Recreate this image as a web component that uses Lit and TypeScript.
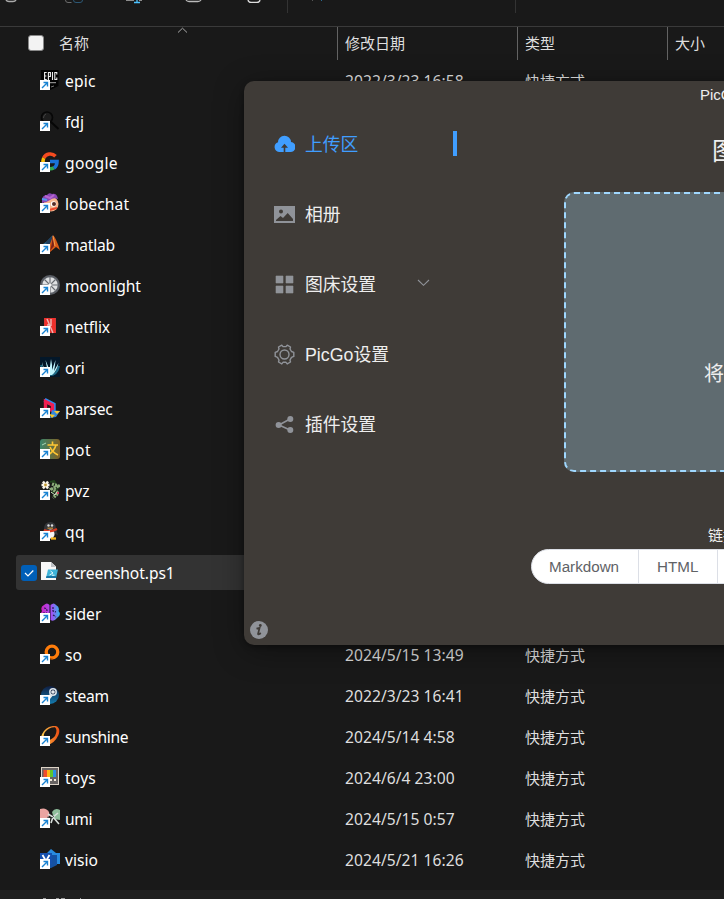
import { LitElement, html, css, svg, nothing } from "lit";
import { customElement, property } from "lit/decorators.js";
import { styleMap } from "lit/directives/style-map.js";

const icons: Record<string, unknown> = {
  epic: svg`<path d="M1 0H18.5V16L10 20L1 17Z" fill="#030303"/><path d="M6.7 2.5H4.6V9.5H6.7M4.6 6H6.4M8.4 10V2.5H10.4V6.5H8.4M12.5 2V10M16.8 4.5V2.5H14.8V9.5H16.8V7.5" fill="none" stroke="#eee" stroke-width="1.1"/><path d="M10 12.7H16" stroke="#aaa"/><path d="M11 17L14 16" stroke="#777"/>`,
  fdj: svg`<circle cx="7" cy="6.5" r="5.5" fill="#1d1d1d" stroke="#070707" stroke-width="1.7"/><path d="M11 11L18.5 18" stroke="#060606" stroke-width="2"/><path d="M3.5 7A4 4 0 0 1 6 3" stroke="#444" fill="none"/>`,
  google: svg`<g fill="none" stroke-width="3.6"><path d="M15.5 4.2A7.3 7.3 0 0 0 3.7 6" stroke="#f44b20"/><path d="M3.7 6A7.5 7.5 0 0 0 3.5 12" stroke="#fbbc05"/><path d="M3.5 12A7.3 7.3 0 0 0 14 15.8" stroke="#34a853"/><path d="M10 9.5H17Q17 14 14 16" stroke="#1a73d9"/></g>`,
  lobechat: svg`<circle cx="11" cy="11" r="7.5" fill="#f5b58d"/><path d="M2 6Q3 2 7 2Q9-1 12 1Q17 0 18 6Q13 4 10 7Q6 10 2 10Z" fill="#8947b5"/><path d="M5 3L10 5L14 2" stroke="#b765d0" stroke-width="2" fill="none"/><path d="M2 6L7 7" stroke="#559af0" stroke-width="2"/><circle cx="13.5" cy="11" r="2.8" fill="#fff"/><circle cx="14" cy="11" r="2" fill="#552c27"/><path d="M9 17L17 15" stroke="#ea4a2e" stroke-width="2"/>`,
  matlab: svg`<path d="M0 12L6 8L13 1L10 14L5 16Z" fill="#28658d"/><path d="M6 8L13 1L11 11L7 12Z" fill="#203f5c"/><path d="M13 1Q16 4 20 16L16 13L10 18L8 13Q11 9 13 1Z" fill="#d75a19"/><path d="M13 1L14 12L10 17Q12 10 13 1Z" fill="#7b221a"/><path d="M13 2L15 12" stroke="#f4a04b"/>`,
  moonlight: svg`<circle cx="10" cy="10" r="10" fill="#5a5e65"/><circle cx="10" cy="10" r="7.7" fill="#dfe1e3"/><path d="M10 2V18M2 10H18M4.5 4.5L15.5 15.5M4.5 15.5L15.5 4.5" stroke="#676b71" stroke-width="1.1"/><circle cx="10" cy="10" r="1.7" fill="#f5f5f5"/>`,
  netflix: svg`<path d="M4 2H16V17H4Z" fill="#d93632"/><path d="M5 2H8L11 10V2H15V17H12L8 8V17H5Z" fill="#ee2f2b"/><path d="M7 3L13 17M8 8V15M11 3V10" stroke="#eeb9b7" stroke-width="1.4"/>`,
  ori: svg`<rect width="20" height="20" fill="#031729"/><path d="M1 8Q4 18 10 18Q17 18 19 9" stroke="#1f6d8a" stroke-width="2" fill="none"/><path d="M2 5Q2 11 8 16L5.5 3Q8 9 9.5 13L11 2Q12.5 8 12 13L15.5 3Q15 10 14 14L18.5 6Q17 14 12 18H8Q4 13 2 5Z" fill="#bff3fc"/>`,
  parsec: svg`<path d="M5 1.5V13" stroke="#2f8cf2" stroke-width="2"/><path d="M4.5 2L13.5 6.5V13" stroke="#2f8cf2" stroke-width="4.4" fill="none"/><path d="M5.5 17V3.5L12.5 7V12.5L8 11" stroke="#f01f51" stroke-width="3.4" fill="none"/><path d="M12 12L20 13L16 19L10 20Z" fill="#3487dc"/><path d="M14 13L20 13L17 16Z" fill="#f9c631"/><path d="M9 16L15 17L12 20Z" fill="#f5c626"/>`,
  pot: svg`<defs><linearGradient id="potg"><stop stop-color="#3b856c"/><stop offset="1" stop-color="#826123"/></linearGradient></defs><rect width="20" height="20" rx="3" fill="url(#potg)"/><path d="M7.5 6H18M12.5 2.5V6M16 6Q14.5 12 8 16M10 8Q12 13 18 16" stroke="#ffc633" stroke-width="1.6" fill="none"/><path d="M2 6L6 4" stroke="#a8d8b7"/>`,
  pvz: svg`<path d="M10 2L14 1L18 8L12 13" stroke="#21431c" stroke-width="2" fill="none"/><g stroke-dasharray="2 1"><path d="M12 4L18 6L12 9L18 13L13 18" stroke="#8cad7a" stroke-width="3.4" fill="none"/></g><path d="M3 1.5L8 8.5M8 1.5L3 8.5M1.5 5H9.5" stroke="#fbf6e8" stroke-width="2.4"/><circle cx="5.5" cy="5" r="1.4" fill="#c09832"/><path d="M11 12L15 15L17 12" stroke="#d4e4c7" fill="none"/><path d="M17 13H19" stroke="#d14262" stroke-width="2"/>`,
  qq: svg`<path d="M4 8Q4 1 10.5 1Q16 1 16 8L18 14L15 13Q14 18 10 18H5L3 11Z" fill="#34363a"/><ellipse cx="10.5" cy="13" rx="4" ry="4.5" fill="#f4f4f4"/><circle cx="8.5" cy="4.5" r="1.2" fill="#ddd"/><circle cx="12" cy="4.5" r="1.2" fill="#ddd"/><path d="M7.5 7.2H13" stroke="#b98a3a" stroke-width="1.3"/><path d="M4 9Q10 12 17 8" stroke="#d9391f" stroke-width="2.2" fill="none"/><path d="M11 17.5H16" stroke="#f5b51b" stroke-width="2.3"/>`,
  file: svg`<path d="M1 0H11L16 4.5V18H1Z" fill="#f7f7f7"/><path d="M11 0V5H16Z" fill="#bec2c6"/><path d="M8 7.5H18L16 16H6Z" fill="#3eb4d9"/><path d="M6.5 14H16.5L16 16H6Z" fill="#1876a6"/><path d="M10.5 9L13 11L9.5 13M12 13.2H14.5" stroke="#e9fbff" fill="none"/>`,
  sider: svg`<defs><linearGradient id="sideg"><stop stop-color="#ce22bd"/><stop offset=".55" stop-color="#a64df5"/><stop offset="1" stop-color="#2cb9ea"/></linearGradient></defs><path d="M9.5 2Q7-1 4 2Q0 4 2 8Q-1 12 3 15Q5 19 9.5 17ZM10.5 2Q14-1 16 2Q20 4 18.5 8Q22 12 17 15Q14 19 10.5 17Z" fill="url(#sideg)"/><path d="M4 5Q7 5 7 8M3 10H7M13 4V8L16 9M13 12L16 14M8 12L6 14" stroke="#26194b" stroke-width="1.2" fill="none" stroke-dasharray="2 1"/>`,
  so: svg`<circle cx="12" cy="8" r="5.8" fill="none" stroke="#ff7d0b" stroke-width="3.3"/><path d="M6.5 12Q8 15 13 15.3" fill="none" stroke="#a94600" stroke-width="1"/>`,
  steam: svg`<defs><linearGradient id="steamg" x2="0" y2="1"><stop stop-color="#101e42"/><stop offset="1" stop-color="#147bae"/></linearGradient></defs><circle cx="10" cy="10" r="9" fill="url(#steamg)"/><path d="M12 9L8 14L4 12" stroke="#e4e9ed" stroke-width="3.2"/><circle cx="13" cy="7" r="3.2" fill="#1c2d4c" stroke="#dce3e8" stroke-width="1.5"/><circle cx="13" cy="7" r="1.8" fill="#e5e9ec"/>`,
  sunshine: svg`<defs><linearGradient id="sung" x1="0" x2="1"><stop stop-color="#ffd04e"/><stop offset="1" stop-color="#ec4b12"/></linearGradient></defs><path fill-rule="evenodd" d="M16 0Q21 2 18.5 9Q14 18.5 7 18.5Q1 17 1 11Q3 4 9 1Q13-.5 16 0ZM15 1.2Q9 1 5 6Q2 11 6 14Q11 15 15 10Q18 4 15 1.2Z" fill="url(#sung)"/>`,
  toys: svg`<rect x="1.5" y=".5" width="17" height="17" fill="#686463" stroke="#ddd4c8"/><path d="M3.5 3H7V10H3.5Z" fill="#ef4c2b"/><path d="M7 3H10V10H7Z" fill="#ffb515"/><path d="M10 3H13V10H10Z" fill="#5fc52e"/><path d="M13 3H16V10H13Z" fill="#2991e4"/><path d="M10 12H12V14H10ZM14 12H16V14H14Z" fill="#f4ece0"/>`,
  umi: svg`<path d="M0 1Q6-1 9 4Q10 9 6 11H0Z" fill="#eaa4a1"/><path d="M12 4Q15-1 20 2V12L14 11Z" fill="#8ebd9b"/><path d="M8 6L13 9L18 5M13 9L11 15M13 9L19 16" stroke="#d8dfdb" stroke-width="1.6" fill="none"/><path d="M7 9L11 11L14 8" stroke="#59615e" fill="none"/>`,
  visio: svg`<path d="M6 5L11 0L16 4H20V15H15L10 19L5 14Z" fill="#288be0"/><path d="M10 6H17V16L11 19L7 15Z" fill="#1551a2"/><path d="M0 4H12V15H0Z" fill="#1550ae"/><path d="M2.5 6L6 12L9.5 6" stroke="#fff" stroke-width="1.8" fill="none"/>`,
};

interface Entry {
  name: string;
  date?: string;
  icon?: string;
  selected?: boolean;
  tracking?: number;
}

const entries: Entry[] = [
  { name: "epic", date: "2022/3/23 16:58", tracking: 0.2 },
  { name: "fdj" },
  { name: "google", tracking: 0.35 },
  { name: "lobechat", tracking: 0.1 },
  { name: "matlab", tracking: -0.25 },
  { name: "moonlight" },
  { name: "netflix", tracking: -0.1 },
  { name: "ori" },
  { name: "parsec", tracking: -0.15 },
  { name: "pot", tracking: 0.5 },
  { name: "pvz" },
  { name: "qq", tracking: 0.3 },
  { name: "screenshot.ps1", icon: "file", selected: true, tracking: -0.07 },
  { name: "sider" },
  { name: "so", date: "2024/5/15 13:49" },
  { name: "steam", date: "2022/3/23 16:41", tracking: -0.3 },
  { name: "sunshine", date: "2024/5/14 4:58", tracking: -0.4 },
  { name: "toys", date: "2024/6/4 23:00", tracking: 0.2 },
  { name: "umi", date: "2024/5/15 0:57", tracking: -0.3 },
  { name: "visio", date: "2024/5/21 16:26" },
];

@customElement("file-row")
export class FileRow extends LitElement {
  @property({ attribute: false }) entry!: Entry;

  static styles = css`
    :host { display: block; height: 35px; }
    .row {
      display: grid;
      grid-template-columns: 321px 180px 150px 1fr;
      align-items: start;
      height: 35px;
      margin-left: 16px;
      border-radius: 3px;
      box-sizing: border-box;
    }
    .selected { background: #333; }
    .name { display: flex; align-items: center; height: 34px; font-size: 15.6px; color: #fff; }
    .check { width: 16px; height: 16px; margin: 2px 4px 0 5px; border-radius: 3px; display: flex; }
    .selected .check { background: #005fb8; }
    .icon { width: 20px; height: 20px; margin: 0 5px 0 -1px; flex: none; }
    .label { line-height: 22px; padding-top: 2px; }
    .meta { padding: 7px 0 0 8px; font-size: 15px; line-height: 22px; color: #dedede; }
    .date { font-size: 15.6px; letter-spacing: 0.05px; }
  `;

  render() {
    const e = this.entry;
    return html`
      <div class="row ${e.selected ? "selected" : ""}">
        <div class="name">
          <span class="check">${e.selected
            ? html`<svg width="16" height="16"><path d="M4 8L7 11L12.3 5.5" fill="none" stroke="#fff" stroke-width="1.2"/></svg>`
            : nothing}</span>
          <svg class="icon" viewBox="0 0 20 20">
            ${icons[e.icon ?? e.name]}
            ${e.selected
              ? nothing
              : svg`<rect y="10" width="10" height="10" fill="#fff"/><path d="M2 18L7 13M3.5 12.5H7.5V16.5" fill="none" stroke="#1983d2" stroke-width="1.4"/>`}
          </svg>
          <span class="label" style=${styleMap({ letterSpacing: `${e.tracking ?? 0}px` })}>${e.name}</span>
        </div>
        <div class="meta date">${e.date}</div>
        <div class="meta">${e.date ? "快捷方式" : nothing}</div>
      </div>
    `;
  }
}

const menu = [
  {
    label: "上传区",
    active: true,
    icon: svg`<path d="M5 18A5 5 0 0 1 4 8.3A6.5 6.5 0 0 1 17 8A5 5 0 0 1 16 18H11.3V13.8H14L10.5 9.8L7 13.8H9.7V18Z" fill="currentColor"/>`,
  },
  {
    label: "相册",
    icon: svg`<path fill-rule="evenodd" d="M0 2H21V19H0ZM2 17H19V15L13.7 9L9 14L6.5 12L2 16ZM7 5.5A2 2 0 1 0 7 9.5A2 2 0 0 0 7 5.5" fill="currentColor"/>`,
  },
  {
    label: "图床设置",
    arrow: true,
    icon: svg`<path d="M2 2H9V9H2ZM12 2H19V9H12ZM2 12H9V19H2ZM12 12H19V19H12Z" fill="currentColor" stroke="currentColor" stroke-width=".6" stroke-linejoin="round"/>`,
  },
  {
    label: "PicGo设置",
    icon: svg`<g fill="none" stroke="currentColor" stroke-width="1.4"><path d="M7.8 1.1L9 2.6H12L13.2 1.1L16.5 3L16 5L17.5 7.5L19.8 8.4V12.4L17.5 13.3L16 16L16.5 18L13.2 19.9L12 18.3H9L7.8 19.9L4.5 18L5 16L3.5 13.3L1.2 12.4V8.4L3.5 7.5L5 5L4.5 3Z" stroke-linejoin="round"/><circle cx="10.5" cy="10.5" r="4.5"/></g>`,
  },
  {
    label: "插件设置",
    icon: svg`<path d="M5 11L16 5M5 11L16 16" stroke="currentColor" stroke-width="1.5"/><g fill="currentColor"><circle cx="4.6" cy="11" r="3"/><circle cx="16.3" cy="5" r="3"/><circle cx="16.3" cy="16" r="3"/></g>`,
  },
];

@customElement("picgo-window")
export class PicgoWindow extends LitElement {
  static styles = css`
    :host {
      display: flex;
      width: 1000px;
      height: 564px;
      border-radius: 10px;
      background: #3f3b37;
      color: #eee;
      font-family: "Liberation Sans", "Noto Sans CJK SC", sans-serif;
      box-shadow: 0 6px 30px rgba(0, 0, 0, 0.35), 0 2px 5px rgba(0, 0, 0, 0.3);
    }
    .side { width: 213px; display: flex; flex-direction: column; flex: none; }
    .menu { padding-top: 28px; flex: 1; }
    .item {
      height: 70px;
      display: flex;
      align-items: center;
      padding-left: 30px;
      font-size: 17.8px;
      line-height: 26px;
    }
    .label { padding-top: 2px; }
    .icon { width: 21px; height: 21px; margin-right: 10px; color: #909399; flex: none; }
    .active, .active .icon { color: #409eff; }
    .bar { width: 4px; height: 25px; margin: 0 0 1px auto; background: #409eff; }
    .arrow { margin: 0 27px 3px auto; }
    .info { width: 18px; height: 18px; margin: 0 0 6px 6px; }
    .main { flex: 1; min-width: 0; display: flex; flex-direction: column; }
    .title { padding: 5px 0 0 243px; font-size: 15px; line-height: 18px; }
    .heading { padding: 28px 0 0 255px; font-size: 25px; line-height: 38px; white-space: nowrap; }
    .drop {
      margin: 22px 0 0 107px;
      width: 562px;
      height: 280px;
      box-sizing: border-box;
      border: 2px dashed #a0d8ff;
      border-radius: 10px;
      background: #5f6b70;
      display: flex;
      align-items: center;
      padding: 80px 0 0 138px;
      font-size: 20px;
    }
    .format { padding: 53px 0 0 251px; font-size: 15px; line-height: 22px; }
    .buttons {
      display: flex;
      width: 600px;
      height: 35px;
      margin: 2px 0 0 74px;
      border-radius: 18px;
      background: #fff;
      color: #606266;
      font-size: 15.2px;
      overflow: hidden;
      box-sizing: border-box;
      border: 1px solid #dcdfe6;
    }
    .button { padding: 0 19px 0 18px; border-right: 1px solid #dcdfe6; line-height: 34px; }
    .button:first-child { padding: 0 19px 0 17px; }
    .button:last-child { border: 0; }
  `;

  render() {
    return html`
      <div class="side">
        <div class="menu">
          ${menu.map(
            (m) => html`
              <div class="item ${m.active ? "active" : ""}">
                <svg class="icon" viewBox="0 0 21 21">${m.icon}</svg>
                <span class="label">${m.label}</span>
                ${m.active ? html`<span class="bar"></span>` : nothing}
                ${m.arrow
                  ? html`<svg class="arrow" width="13" height="8"><path d="M1 1L6.5 6.3L12 1" fill="none" stroke="#909399" stroke-width="1.1"/></svg>`
                  : nothing}
              </div>
            `,
          )}
        </div>
        <svg class="info" viewBox="0 0 18 18">
          <circle cx="9" cy="9" r="9" fill="#909399"/>
          <circle cx="10.3" cy="4.5" r="1.4" fill="#3f3b37"/>
          <path d="M6.5 7.7L9.6 7L8 13Q8.3 14 10.8 12" fill="none" stroke="#3f3b37" stroke-width="1.7"/>
        </svg>
      </div>
      <div class="main">
        <div class="title">PicGo - 2.3.1</div>
        <div class="heading">图片上传</div>
        <div class="drop">将文件拖到此处</div>
        <div class="format">链接格式</div>
        <div class="buttons">
          ${["Markdown", "HTML", "URL", "UBB", "Custom"].map((b) => html`<span class="button">${b}</span>`)}
        </div>
      </div>
    `;
  }
}

@customElement("app-root")
export class AppRoot extends LitElement {
  static styles = css`
    :host {
      display: flex;
      flex-direction: column;
      position: relative;
      width: 724px;
      height: 899px;
      overflow: hidden;
      background: #191919;
      color: #dedede;
      font-family: "Noto Sans", "Noto Sans CJK SC", sans-serif;
    }
    .toolbar { height: 26px; border-bottom: 1px solid #3a3a3a; flex: none; }
    .toolbar svg { display: block; }
    .header {
      display: grid;
      grid-template-columns: 337px 180px 150px 1fr;
      height: 33px;
      font-size: 15px;
      line-height: 33px;
      flex: none;
    }
    .cell { padding-left: 7px; border-left: 1px solid #636363; }
    .first { display: flex; align-items: center; border: 0; padding-left: 28px; position: relative; }
    .box { width: 14px; height: 14px; border: 1px solid #888; border-radius: 3px; background: #f3f3f3; margin: 0 15px 1px 0; }
    .sort { position: absolute; left: 177px; top: 0; }
    .list { display: flex; flex-direction: column; gap: 6px; padding-top: 3px; flex: none; }
    .status { height: 9px; margin-top: auto; background: #1f1f1f; flex: none; }
    .status svg { display: block; }
    .popup { position: absolute; left: 244px; top: 81px; }
  `;

  render() {
    return html`
      <div class="toolbar">
        <svg width="724" height="26" fill="none">
          <path d="M6 0Q7 1.5 9 1.5H13Q15 1.5 16 0" stroke="#aaa" stroke-width="1.4"/>
          <path d="M65.5 0Q65.5 2.5 68 2.5H71.5" stroke="#6b6b6b"/>
          <path d="M73.5 0Q73.5 2.5 76 2.5H80Q82.5 2.5 82.5 0" stroke="#2c5774"/>
          <path d="M126 .5H134M139 .5H142" stroke="#8c8c8c"/>
          <path d="M134 2.5H140M137 0V2.5" stroke="#4cc2ff" stroke-width="1.3"/>
          <path d="M186 0Q187 1.5 189 1.5H198Q200 1.5 201 0" stroke="#bbb" stroke-width="1.3"/>
          <path d="M248 0Q248.5 2.3 251 2.3H257Q259.5 2.3 260 0" stroke="#ddd" stroke-width="1.3"/>
          <path d="M287.5 0V13M515.5 0V13" stroke="#333"/>
          <path d="M312.5 0V1" stroke="#555"/><path d="M321.5 0V1" stroke="#2c6a90"/>
        </svg>
      </div>
      <div class="header">
        <div class="cell first">
          <span class="box"></span>名称
          <svg class="sort" width="11" height="7"><path d="M1 5.5L5.5 1.2L10 5.5" fill="none" stroke="#aaa"/></svg>
        </div>
        <div class="cell">修改日期</div>
        <div class="cell">类型</div>
        <div class="cell">大小</div>
      </div>
      <div class="list">${entries.map((e) => html`<file-row .entry=${e}></file-row>`)}</div>
      <div class="status">
        <svg width="120" height="9"><path d="M43 8.5H46M56 8.5H59M61 8.5H65M80 8.5H81" stroke="#999"/></svg>
      </div>
      <picgo-window class="popup"></picgo-window>
    `;
  }
}
